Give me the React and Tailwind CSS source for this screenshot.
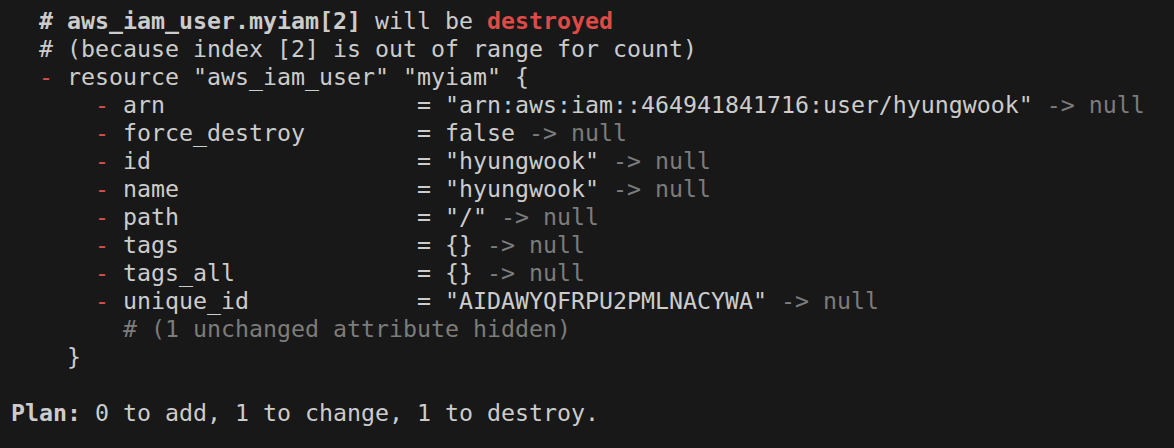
const pad = (s, n) => s + ' '.repeat(Math.max(0, n - s.length));

const ATTRS = [
    ['arn', '"arn:aws:iam::464941841716:user/hyungwook"'],
    ['force_destroy', 'false'],
    ['id', '"hyungwook"'],
    ['name', '"hyungwook"'],
    ['path', '"/"'],
    ['tags', '{}'],
    ['tags_all', '{}'],
    ['unique_id', '"AIDAWYQFRPU2PMLNACYWA"'],
];

function Minus() {
    return <span className="text-[#d2504c]">-</span>;
}

export default function App() {
    return (
        <div className="w-[1174px] h-[448px] bg-[#181818] overflow-hidden pt-[7px] pl-[11px]">
            <pre
                className="text-[#cccccc] text-[23.25px] leading-[28px] whitespace-pre m-0"
                style={{ fontFamily: '"DejaVu Sans Mono", monospace' }}
            >
                <div>
                    {'  '}
                    <span className="font-bold">#</span>{' '}
                    <span className="font-bold">aws_iam_user.myiam[2]</span>
                    {' will be '}
                    <span className="font-bold text-[#de4a47]">destroyed</span>
                </div>
                <div>{'  # (because index [2] is out of range for count)'}</div>
                <div>
                    {'  '}
                    <Minus />
                    {' resource "aws_iam_user" "myiam" {'}
                </div>
                {ATTRS.map(([k, v]) => (
                    <div key={k}>
                        {'      '}
                        <Minus />
                        {' ' + pad(k, 21) + '= ' + v}
                        <span className="text-[#7c7c7c]"> -&gt; null</span>
                    </div>
                ))}
                <div className="text-[#7c7c7c]">{'        # (1 unchanged attribute hidden)'}</div>
                <div>{'    }'}</div>
                <div>{' '}</div>
                <div>
                    <span className="font-bold">Plan:</span>
                    {' 0 to add, 1 to change, 1 to destroy.'}
                </div>
            </pre>
        </div>
    );
}
